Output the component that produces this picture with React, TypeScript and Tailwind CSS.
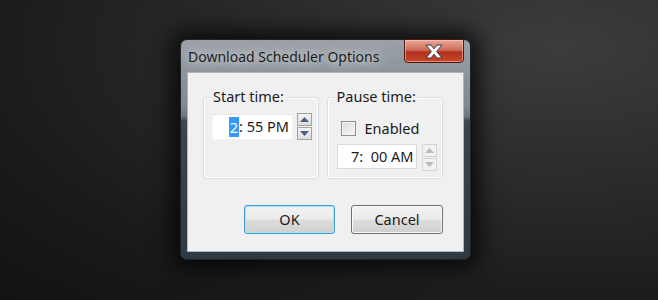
const ui = { fontFamily: '"Noto Sans", "Open Sans", sans-serif' };

function Spin({ disabled }: { disabled?: boolean }) {
  const arrow = disabled ? '#b8bcc0' : '#4a5f86';
  const box = disabled
    ? 'border-[#d4d4d4] bg-[#f2f2f2]'
    : 'border-[#a3a3a3] bg-[linear-gradient(#f4f4f4,#dcdcdc)]';
  return (
    <div className="flex flex-col gap-[1px]">
      <div className={`w-[15px] h-[13px] border flex items-center justify-center ${box}`}>
        <svg width="9" height="5" viewBox="0 0 9 5">
          <path d="M0 5 L4.5 0 L9 5 Z" fill={arrow} />
        </svg>
      </div>
      <div className={`w-[15px] h-[13px] border flex items-center justify-center ${box}`}>
        <svg width="9" height="5" viewBox="0 0 9 5">
          <path d="M0 0 L4.5 5 L9 0 Z" fill={arrow} />
        </svg>
      </div>
    </div>
  );
}

function Group({ label, width, children }: { label: string; width: string; children: React.ReactNode }) {
  return (
    <div className={`relative h-[82px] ${width} rounded-[3px] border border-[#d5dfe5] shadow-[inset_0_0_0_1px_#ffffff]`}>
      <span className="absolute -top-[12px] left-[7px] px-[2px] bg-[#f0f0f0] text-[14.5px] leading-[20px] text-[#1b1b1b]">
        {label}
      </span>
      {children}
    </div>
  );
}

function WinButton({ label, focused }: { label: string; focused?: boolean }) {
  return (
    <div
      className={`h-[29px] rounded-[3px] border flex items-center justify-center text-[14.5px] text-[#1b1b1b] bg-[linear-gradient(#f2f2f2_0%,#ebebeb_48%,#dddddd_52%,#cfcfcf_100%)] ${
        focused
          ? 'w-[91px] border-[#3c9fd6] shadow-[inset_0_0_0_1px_#a6e3f8]'
          : 'w-[92px] border-[#707070] shadow-[inset_0_0_0_1px_#fafafa]'
      }`}
    >
      {label}
    </div>
  );
}

export default function App() {
  return (
    <div
      style={ui}
      className="w-[658px] h-[300px] overflow-hidden pl-[180px] pt-[39px] bg-[radial-gradient(ellipse_at_85%_15%,#3c3c3c_0%,#2a2a2a_40%,#1a1a1a_75%,#121212_100%)]"
    >
      <div className="relative w-[291px] h-[221px] rounded-[7px] flex flex-col px-[6px] pb-[7px] border border-[#1c242b] shadow-[0_0_22px_8px_rgba(0,0,0,0.75)] bg-[linear-gradient(#9ba1a7_0%,#80878e_30%,#6d757d_35%,#3a4550_37%,#2e3942_100%)]">
        {/* title bar */}
        <div className="h-[32px] flex items-start justify-between">
          <span className="pt-[7px] pl-[1px] text-[14px] leading-[20px] text-[#1e1e1e] [text-shadow:0_0_8px_#e4e7ea,0_0_14px_#d0d4d8]">
            Download Scheduler Options
          </span>
          <div className="-mt-[1px] w-[60px] h-[24px] rounded-b-[4px] border border-[#4a1a12] flex items-center justify-center bg-[linear-gradient(#e8a89a_0%,#cf6e5c_45%,#b0311c_55%,#c9482c_100%)] shadow-[inset_0_0_0_1px_rgba(255,210,200,0.5)]">
            <svg width="22" height="17" viewBox="0 0 22 17">
              <path
                d="M3 2 H8 L11 5.8 L14 2 H19 L13.6 8.5 L19 15 H14 L11 11.2 L8 15 H3 L8.4 8.5 Z"
                fill="#ffffff"
                stroke="#3b3b3b"
                strokeWidth="1"
                strokeLinejoin="round"
              />
            </svg>
          </div>
        </div>

        {/* client area */}
        <div className="flex-1 bg-[#f0f0f0] border border-[#aeb7bf] flex flex-col pt-[24px] pl-[15px] pr-[20px]">
          <div className="flex gap-[8px]">
            <Group label="Start time:" width="w-[118px]">
              <div className="flex items-start gap-[4px] pl-[8px] pt-[16px]">
                <div className="w-[81px] h-[26px] bg-white border border-[#f3f3f3] border-t-[#e6e6e6] flex items-center justify-end pr-[3px] text-[14.5px] text-[#1b1b1b]">
                  <span className="bg-[#3399ff] text-white px-[1px] leading-[20px]">2</span>
                  <span>: 55 PM</span>
                </div>
                <div className="-mt-[1px]">
                  <Spin />
                </div>
              </div>
            </Group>
            <Group label="Pause time:" width="w-[119px]">
              <div className="flex items-center gap-[9px] pl-[13px] pt-[20px]">
                <div className="w-[15px] h-[15px] border border-[#8e8f8f] bg-[linear-gradient(135deg,#dcdcdc,#f7f7f7)] shadow-[inset_0_0_0_1px_#f4f4f4]" />
                <span className="text-[14.5px] leading-[20px] text-[#1b1b1b]">Enabled</span>
              </div>
              <div className="flex items-start gap-[5px] pl-[9px] pt-[6px]">
                <div className="w-[80px] h-[25px] bg-white border border-[#d9d9d9] flex items-center justify-end pr-[2px] text-[14.5px] text-[#1b1b1b]">
                  7:&nbsp; 00 AM
                </div>
                <Spin disabled />
              </div>
            </Group>
          </div>
          <div className="flex justify-end gap-[16px] mt-[26px]">
            <WinButton label="OK" focused />
            <WinButton label="Cancel" />
          </div>
        </div>
      </div>
    </div>
  );
}
